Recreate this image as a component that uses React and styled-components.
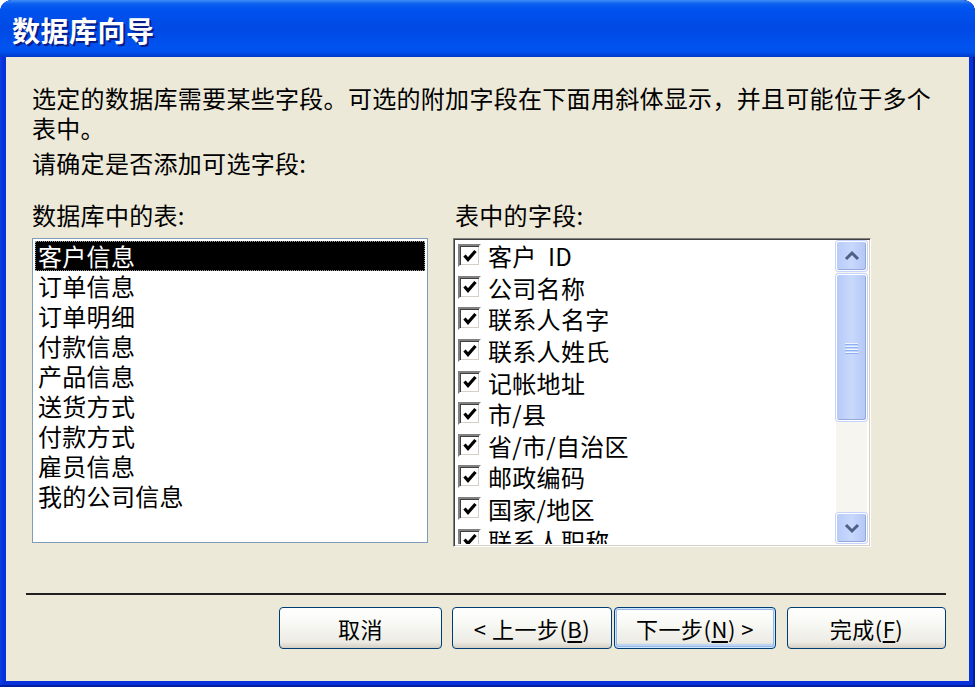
import styled, { createGlobalStyle } from 'styled-components'

const GlobalStyle = createGlobalStyle`
	html, body {
		margin: 0;
		padding: 0;
		background: #fff;
	}
	body {
		font-family: "Noto Sans CJK SC", "Noto Sans", sans-serif;
		color: #000;
	}
`

const tables = ['客户信息', '订单信息', '订单明细', '付款信息', '产品信息', '送货方式', '付款方式', '雇员信息', '我的公司信息']

const fields = ['客户  ID', '公司名称', '联系人名字', '联系人姓氏', '记帐地址', '市/县', '省/市/自治区', '邮政编码', '国家/地区', '联系人职称']

const Check = () => (
	<CheckBox>
		<svg width="16" height="16" viewBox="0 0 16 16">
			<polyline points="2.5,7.5 6,11.5 13.5,3" fill="none" stroke="#000" strokeWidth="3.2" />
		</svg>
	</CheckBox>
)

const Arrow = ({ up }) => (
	<svg width="16" height="12" viewBox="0 0 16 12">
		<polyline
			points={up ? '2,9 8,3 14,9' : '2,3 8,9 14,3'}
			fill="none"
			stroke="#4D6185"
			strokeWidth="3"
		/>
	</svg>
)

const App = () => {
	return (
		<>
			<GlobalStyle />
			<Window>
				<TitleBar>
					<Title>数据库向导</Title>
				</TitleBar>
				<Body>
					<Intro>
						选定的数据库需要某些字段。可选的附加字段在下面用斜体显示，并且可能位于多个
						<br />
						表中。
					</Intro>
					<Prompt>请确定是否添加可选字段:</Prompt>
					<Columns>
						<Column $w={396}>
							<Label>数据库中的表:</Label>
							<TableList>
								{tables.map((t, i) => (
									<TableItem key={t} $selected={i === 0}>{t}</TableItem>
								))}
							</TableList>
						</Column>
						<Column $w={418}>
							<Label $indent={2}>表中的字段:</Label>
							<FieldBox>
								<FieldList>
									{fields.map(f => (
										<FieldItem key={f}>
											<Check />
											<span>{f}</span>
										</FieldItem>
									))}
								</FieldList>
								<ScrollBar>
									<ScrollBtn><Arrow up /></ScrollBtn>
									<Thumb>
										<Grip>
											<i /><i /><i /><i />
										</Grip>
									</Thumb>
									<Track />
									<ScrollBtn><Arrow /></ScrollBtn>
								</ScrollBar>
							</FieldBox>
						</Column>
					</Columns>
					<Divider />
					<ButtonRow>
						<Button $w={163}>取消</Button>
						<Button $w={160} $ml={10}>&lt; 上一步(<u>B</u>)</Button>
						<Button $w={162} $ml={2} $default>下一步(<u>N</u>) &gt;</Button>
						<Button $w={159} $ml={11}>完成(<u>F</u>)</Button>
					</ButtonRow>
				</Body>
			</Window>
		</>
	)
}

const Window = styled.div`
	width: 975px;
	height: 687px;
	display: flex;
	flex-direction: column;
	background: #0831D9;
	border-radius: 12px 12px 0 0;
	overflow: hidden;
	padding: 0 6px 6px;
	box-sizing: border-box;
	box-shadow: inset 0 -2px 0 #001EA0, inset 2px 0 0 #0A3DE0, inset -2px 0 0 #001EA0;
`

const TitleBar = styled.div`
	height: 57px;
	margin: 0 -6px;
	flex-shrink: 0;
	display: flex;
	align-items: center;
	padding-left: 12px;
	border-radius: 12px 12px 0 0;
	background: linear-gradient(
		to bottom,
		#3F8CF3 0%,
		#0A5FF0 7%,
		#0053EE 16%,
		#0049E4 50%,
		#0053F0 82%,
		#0050EB 92%,
		#0038C8 100%
	);
`

const Title = styled.div`
	color: #fff;
	font-size: 28px;
	font-weight: bold;
	letter-spacing: 0.5px;
	text-shadow: 2px 2px 0 #0A1E86;
	margin-top: 2px;
`

const Body = styled.div`
	flex: 1;
	background: #ECE9D8;
	padding: 26px 23px 0 26px;
	display: flex;
	flex-direction: column;
	font-size: 24px;
	letter-spacing: 0.3px;
`

const Intro = styled.div`
	line-height: 30px;
	white-space: nowrap;
`

const Prompt = styled.div`
	line-height: 30px;
	margin-top: 5px;
`

const Columns = styled.div`
	display: flex;
	gap: 25px;
	margin-top: 22px;
	height: 347px;
`

const Column = styled.div`
	width: ${p => p.$w}px;
	display: flex;
	flex-direction: column;
`

const Label = styled.div`
	line-height: 30px;
	margin-bottom: 8px;
	padding-left: ${p => p.$indent || 0}px;
`

const TableList = styled.div`
	height: 305px;
	box-sizing: border-box;
	background: #fff;
	border: 1px solid #7F9DB9;
	padding: 2px 2px 0 2px;
	overflow: hidden;
`

const TableItem = styled.div`
	height: 30px;
	line-height: 28px;
	padding-left: 2px;
	box-sizing: border-box;
	border: 1px dotted ${p => (p.$selected ? '#9a9a9a' : 'transparent')};
	background: ${p => (p.$selected ? '#000' : 'transparent')};
	color: ${p => (p.$selected ? '#fff' : '#000')};
`

const FieldBox = styled.div`
	height: 309px;
	box-sizing: border-box;
	display: flex;
	background: #fff;
	border: 1px solid;
	border-color: #808080 #fff #fff #808080;
	box-shadow: inset 1px 1px 0 #404040, inset -1px -1px 0 #D4D0C8;
	padding: 1px 3px 2px 1px;
	overflow: hidden;
`

const FieldList = styled.div`
	flex: 1;
	overflow: hidden;
	padding-left: 3px;
`

const FieldItem = styled.div`
	height: 31.6px;
	display: flex;
	align-items: center;
	gap: 7px;
	white-space: pre;
`

const CheckBox = styled.div`
	width: 23px;
	height: 23px;
	flex-shrink: 0;
	box-sizing: border-box;
	background: #fff;
	border: 2px solid;
	border-color: #808080 #fff #fff #808080;
	box-shadow: inset 1px 1px 0 #404040, inset -1px -1px 0 #D4D0C8;
	display: flex;
	align-items: center;
	justify-content: center;
`

const ScrollBar = styled.div`
	width: 31px;
	display: flex;
	flex-direction: column;
	gap: 3px;
	background: #F6F5F0;
	padding: 1px 0;
`

const ScrollBtn = styled.div`
	height: 30px;
	flex-shrink: 0;
	box-sizing: border-box;
	border: 1px solid #fff;
	border-radius: 3px;
	background: linear-gradient(to right, #B9CCF8, #C8D8FD 50%, #B3C6F5);
	box-shadow: 0 0 0 1px #C3D3FD, inset -1px -1px 0 #95A9D8;
	display: flex;
	align-items: center;
	justify-content: center;
`

const Thumb = styled(ScrollBtn)`
	height: 147px;
	background: linear-gradient(to right, #B6CAF7, #C9D9FC 50%, #B4C7F6);
`

const Grip = styled.div`
	display: flex;
	flex-direction: column;
	gap: 2px;

	i {
		display: block;
		width: 13px;
		height: 1px;
		background: #EEF4FE;
		box-shadow: 0 1px 0 #8CB0F8;
	}
`

const Track = styled.div`
	flex: 1;
`

const Divider = styled.div`
	margin: 46px 0 0 -6px;
	height: 0;
	border-top: 2px solid #202020;
`

const ButtonRow = styled.div`
	display: flex;
	justify-content: flex-end;
	margin-top: 12px;
`

const Button = styled.div`
	width: ${p => p.$w}px;
	height: 42px;
	margin-left: ${p => p.$ml || 0}px;
	box-sizing: border-box;
	border: 1px solid #003C74;
	border-radius: 4px;
	background: linear-gradient(to bottom, #fff 0%, #F8F8F4 40%, #ECEBE4 85%, #D6D0C5 100%);
	box-shadow: ${p => (p.$default
		? 'inset 0 0 0 1px #CEE7FF, inset 0 0 0 2px #98B8EA, inset 0 -2px 0 2px #BCD4F6'
		: 'inset 0 -1px 0 #D6D0C5')};
	display: flex;
	align-items: center;
	justify-content: center;
	font-size: 22px;
	letter-spacing: 0.5px;

	u {
		text-underline-offset: 3px;
	}
`

export default App
